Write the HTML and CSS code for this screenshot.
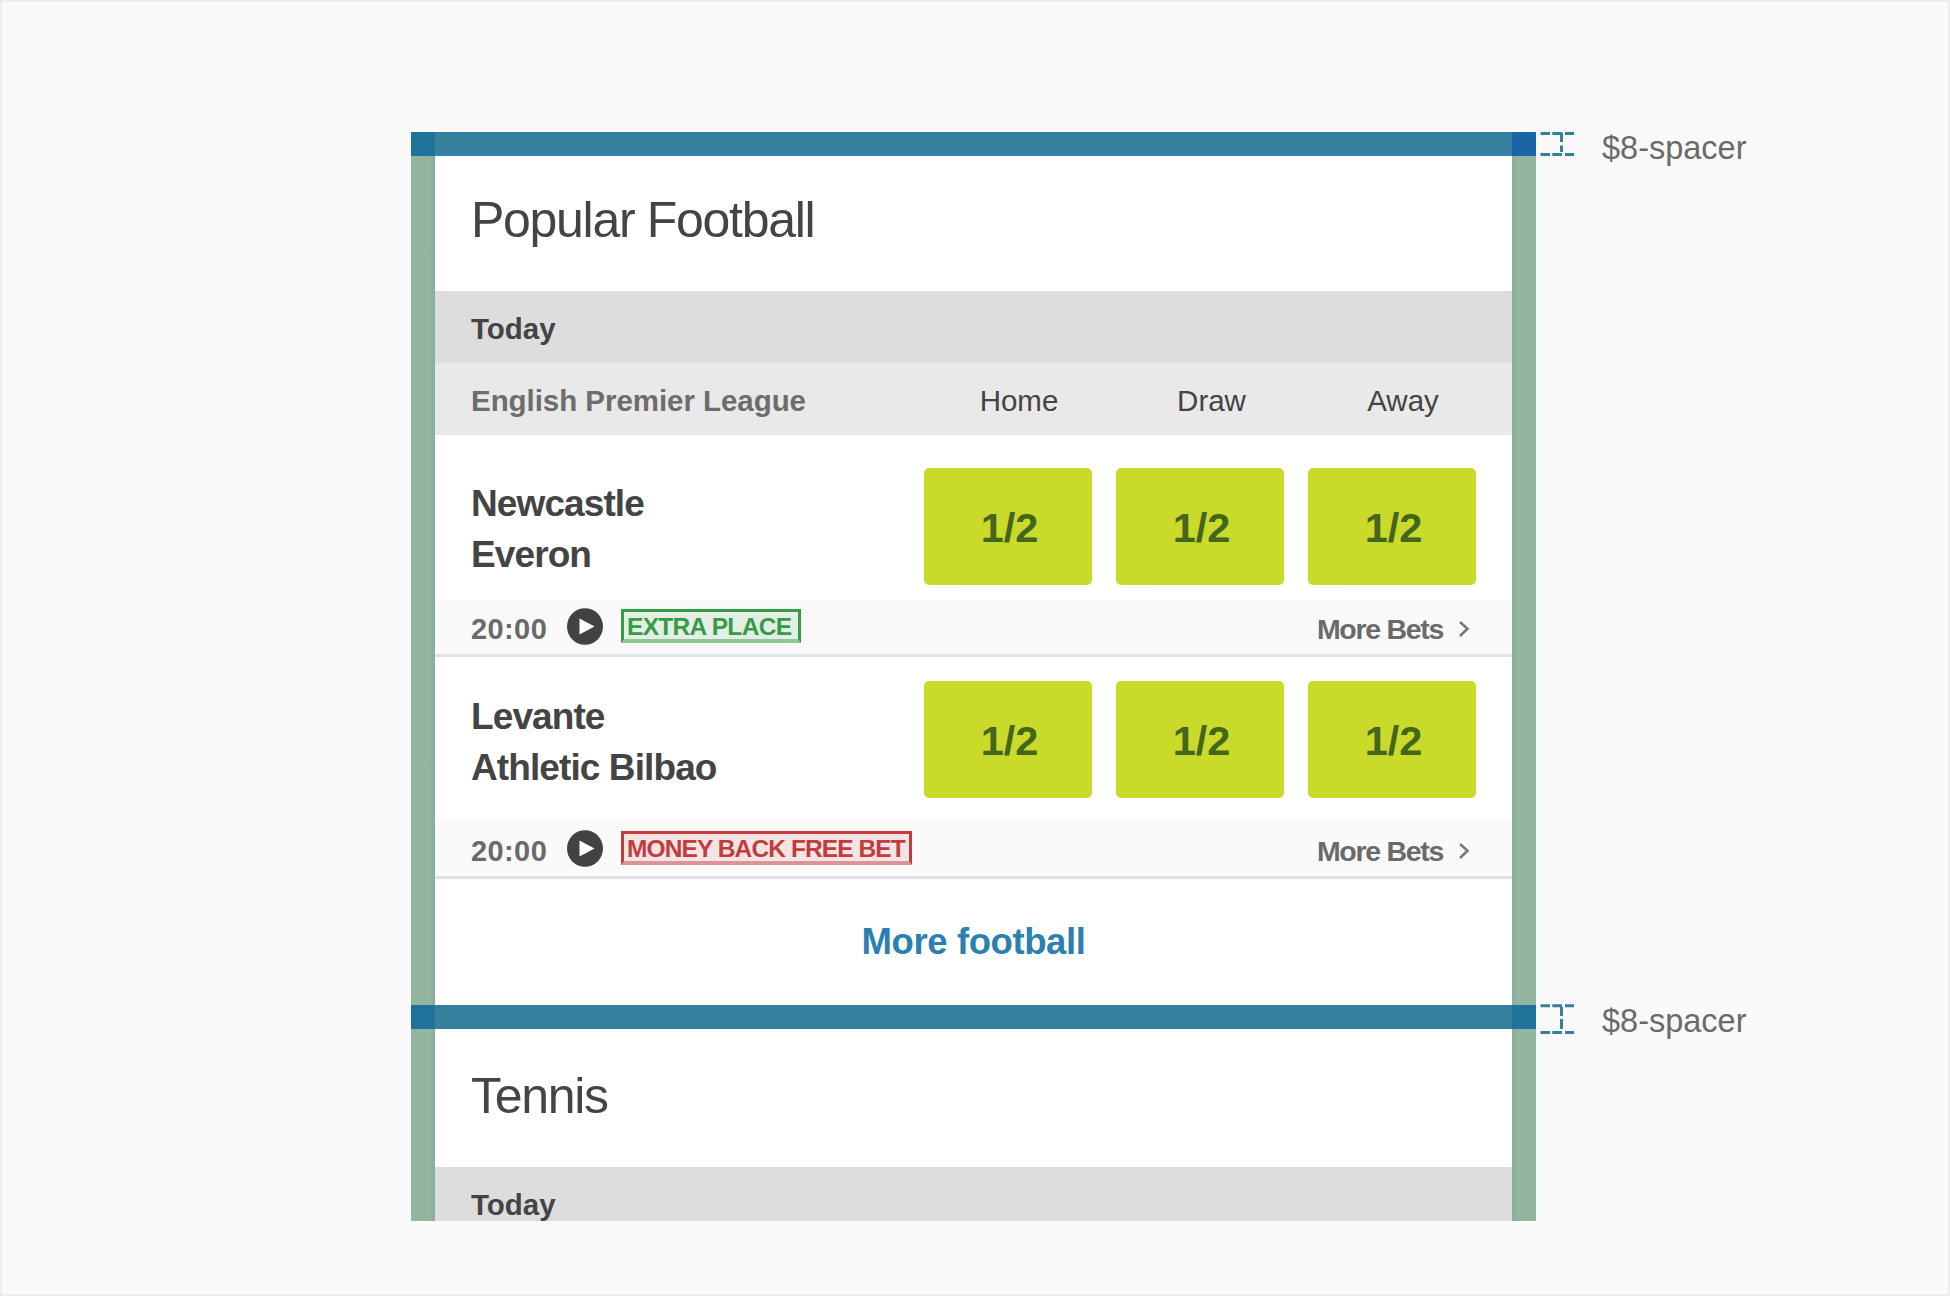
FILE: index.html
```html
<!DOCTYPE html>
<html lang="en">
<head>
<meta charset="utf-8">
<title>Spacing between cards</title>
<link rel="stylesheet" href="styles.css">
</head>
<body>
<main class="stage">
  <div class="device">
    <div class="spacer spacer-top"><i class="corner"></i><i class="corner corner-strong"></i></div>
    <div class="card-row">
      <section class="card">
        <h1 class="title">Popular Football</h1>
        <div class="day">Today</div>
        <div class="league">
          <span class="league-name">English Premier League</span>
          <span class="col">Home</span><span class="col col-draw">Draw</span><span class="col">Away</span>
        </div>
        <article class="event">
          <div class="event-main">
            <div class="teams"><div>Newcastle</div><div>Everon</div></div>
            <button class="odds">1/2</button><button class="odds">1/2</button><button class="odds">1/2</button>
          </div>
          <div class="event-info">
            <span class="time">20:00</span>
            <svg class="play" viewBox="0 0 36 37"><ellipse cx="18" cy="18.5" rx="18" ry="18.3"/><path class="play-tri" d="M12.5 10.5 L27.5 18.5 L12.5 26.5 Z"/></svg>
            <span class="tag tag-green">EXTRA PLACE</span>
            <a class="more">More Bets</a>
            <svg class="chevron" viewBox="0 0 12 18"><path d="M2 2 L9.5 8.7 L2 16"/></svg>
          </div>
        </article>
        <article class="event event-next">
          <div class="event-main">
            <div class="teams"><div>Levante</div><div>Athletic Bilbao</div></div>
            <button class="odds">1/2</button><button class="odds">1/2</button><button class="odds">1/2</button>
          </div>
          <div class="event-info">
            <span class="time">20:00</span>
            <svg class="play" viewBox="0 0 36 37"><ellipse cx="18" cy="18.5" rx="18" ry="18.3"/><path class="play-tri" d="M12.5 10.5 L27.5 18.5 L12.5 26.5 Z"/></svg>
            <span class="tag tag-red">MONEY BACK FREE BET</span>
            <a class="more">More Bets</a>
            <svg class="chevron" viewBox="0 0 12 18"><path d="M2 2 L9.5 8.7 L2 16"/></svg>
          </div>
        </article>
        <a class="more-sport">More football</a>
      </section>
    </div>
    <div class="spacer"><i class="corner"></i><i class="corner"></i></div>
    <div class="card-row">
      <section class="card">
        <h2 class="title title-tennis">Tennis</h2>
        <div class="day day-cut">Today</div>
      </section>
    </div>
  </div>
  <aside class="notes">
    <div class="note">
      <svg class="bracket" viewBox="0 0 34 30"><path d="M.5 1.5H10M12.3 1.5H22M25 1.5H34M.5 22.5H10M12.3 22.5H22M25 22.5H34M21.5 1V10M21.5 13.5V20"/></svg>
      <span class="note-text">$8-spacer</span>
    </div>
    <div class="note note-low">
      <svg class="bracket" viewBox="0 0 34 30"><path d="M.5 1.7H10M12.3 1.7H22M25 1.7H34M.5 28.5H10M12.3 28.5H22M25 28.5H34M21.5 3V12M21.5 15V25"/></svg>
      <span class="note-text">$8-spacer</span>
    </div>
  </aside>
</main>
</body>
</html>
```
FILE: styles.css
```css
* { box-sizing: border-box; }
body { margin: 0; font-family: "Liberation Sans", Arial, sans-serif; color: #444; }
.stage {
  display: flex;
  width: 1950px;
  height: 1296px;
  padding: 130px 0 0 409px;
  border: 2px solid #eee;
  background: #fafafa;
  overflow: hidden;
}
.device { width: 1125px; height: 1089px; overflow: hidden; flex: none; }

.spacer { display: flex; justify-content: space-between; height: 24px; background: #35809c; }
.spacer-top { background: linear-gradient(#35809c 20px, #3682b0 22px); }
.corner { width: 24px; background: #1f729a; }
.corner-strong { background: #1965a6; }

.card-row {
  padding: 0 24px;
  background: linear-gradient(90deg, #93b59e 18px, #88ad98 24px, #88ad98 1101px, #93b59e 1107px);
}
.card { background: #fff; }
.title { margin: 0; height: 135px; padding-left: 36px; font-size: 50px; font-weight: 400; line-height: 129px; letter-spacing: -1.3px; }
.title-tennis { height: 138px; line-height: 134px; }
.day { height: 72px; padding: 2px 36px 0; background: #ddd; font-size: 29.5px; font-weight: 700; line-height: 72px; }
.day-cut { height: 54px; }

.league { display: flex; height: 72px; padding: 2px 12px 0 36px; background: #e9e9e9; font-size: 29.5px; line-height: 72px; }
.league-name { flex: 1; color: #6d6d6d; font-weight: 700; letter-spacing: -.05px; }
.col { width: 192px; padding-right: 2px; text-align: center; }
.col-draw { padding-right: 1px; }

.event-main { display: flex; gap: 24px; height: 165px; padding: 33px 36px 0; }
.event-next .event-main { height: 161px; padding-top: 24px; }
.teams { flex: 1; padding-top: 10px; font-size: 37px; font-weight: 700; line-height: 51px; letter-spacing: -.9px; }
.odds {
  width: 168px;
  height: 117px;
  padding: 2px 0 0 3px;
  border: 0;
  border-radius: 5px;
  background: #c9da2a;
  color: #44661a;
  font: 700 41.5px/115px "Liberation Sans", Arial, sans-serif;
}
.event-info {
  display: flex;
  align-items: center;
  height: 57px;
  padding: 0 42px 2px 36px;
  border-bottom: 3px solid #e1e2e8;
  background: #fafafa;
  color: #6a6a6a;
  font-size: 29px;
  font-weight: 700;
}
.event-next .event-info { height: 61px; padding-top: 4px; }
.time { width: 96px; padding-top: 6px; letter-spacing: .4px; }
.play { width: 36px; height: 37px; margin-right: 18px; fill: #424242; }
.play-tri { fill: #fff; }
.tag {
  height: 34px;
  padding-left: 3px;
  border: 3px solid;
  border-bottom-width: 4px;
  font-size: 24.5px;
  line-height: 30px;
  white-space: nowrap;
}
.tag-green { width: 180px; border-color: #359c45 #359c45 #8cc796; background: #e3eee4; color: #359c45; letter-spacing: -.7px; }
.tag-red { width: 291px; border-color: #c23b3e #c23b3e #dd9496; background: #f4e4e4; color: #c23b3e; letter-spacing: -.9px; }
.more { margin-left: auto; padding-top: 7px; font-size: 28.5px; letter-spacing: -1.3px; }
.chevron { width: 12px; height: 18px; margin: 6px 0 0 15px; fill: none; stroke: #777; stroke-width: 2.5; }
.more-sport { display: block; height: 126px; color: #2c80b1; font-size: 36.5px; font-weight: 700; line-height: 126px; letter-spacing: -.4px; text-align: center; }

.notes { display: flex; flex-direction: column; gap: 830px; padding-left: 4px; }
.note { display: flex; height: 42px; }
.note-text { margin-left: 28px; color: #6a6a6a; font-size: 32.5px; line-height: 32px; }
.note-low .note-text { line-height: 34px; }
.bracket { width: 34px; height: 30px; fill: none; stroke: #35809c; stroke-width: 3; }
```
